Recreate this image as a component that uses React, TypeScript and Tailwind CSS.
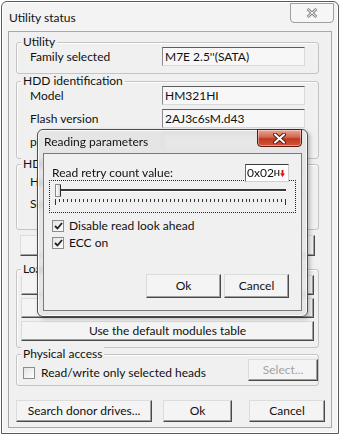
import type { ReactNode } from 'react'

const ui = "font-['Lato','Noto_Sans',sans-serif] text-[12px] leading-[14px] text-[#111]"

function Group({ label, className, children }: { label: string; className?: string; children?: ReactNode }) {
  return (
    <div className={`relative border border-[#c4c4c4] rounded-[3px] shadow-[inset_1px_1px_0_#ffffff] ${className ?? ''}`}>
      <span className="absolute -top-[8px] left-[4px] bg-[#f0f0f0] px-[2px]">{label}</span>
      {children}
    </div>
  )
}

function TextBox({ value }: { value: string }) {
  return (
    <div className="h-[19px] w-[143px] border border-[#d9d9d9] border-t-[#5c5c5c] border-l-[#8a8a8a] bg-[#f7f7f7] pl-[2px] leading-[17px] whitespace-nowrap overflow-hidden">
      {value}
    </div>
  )
}

function Field({ label, value }: { label: string; value: string }) {
  return (
    <div className="flex items-center justify-between pl-[13px] pr-[13px]">
      <span>{label}</span>
      <TextBox value={value} />
    </div>
  )
}

function Button({ children, className, disabled }: { children?: ReactNode; className?: string; disabled?: boolean }) {
  return (
    <div
      className={`flex items-center justify-center border border-[#dcdcdc] border-r-[#4a4a4a] border-b-[#4a4a4a] shadow-[inset_-1px_-1px_0_#a0a0a0] bg-[#f4f4f4] ${
        disabled ? 'text-[#a3a3a3]' : ''
      } ${className ?? ''}`}
    >
      {children}
    </div>
  )
}

function CheckBox({ checked }: { checked?: boolean }) {
  return (
    <span className="flex h-[12px] w-[12px] shrink-0 items-center justify-center border border-[#8c8c8c] bg-[linear-gradient(135deg,#e3e3e3,#ffffff)]">
      {checked && (
        <svg width="9" height="8" viewBox="0 0 9 8">
          <path d="M1 4 L3.5 6.5 L8 1" fill="none" stroke="#222" strokeWidth="1.8" />
        </svg>
      )}
    </span>
  )
}

function ReadingParameters() {
  const ticks = Array.from({ length: 59 }, (_, i) => i)
  return (
    <div className="absolute left-[35px] top-[127px] flex h-[188px] w-[271px] flex-col rounded-[6px] border border-[#4d4d4d] bg-[#e2e2e2]/80 shadow-[inset_0_0_0_1px_rgba(255,255,255,0.8),2px_2px_4px_rgba(0,0,0,0.25)] backdrop-blur-[2px]">
      <div className="relative flex h-[23px] items-center pl-[6px]">
        <span>Reading parameters</span>
        <div className="absolute -top-[1px] left-[219px] flex h-[18px] w-[45px] items-center justify-center rounded-b-[4px] border border-[#5e1a10] bg-[linear-gradient(#e9a797,#d26650_45%,#c0391f_55%,#d2543c)] shadow-[inset_0_0_0_1px_rgba(255,255,255,0.4)]">
          <svg width="13" height="11" viewBox="0 0 13 11">
            <path d="M2 1.5 L11 9.5 M11 1.5 L2 9.5" stroke="#5a1a10" strokeWidth="4" strokeLinecap="round" />
            <path d="M2 1.5 L11 9.5 M11 1.5 L2 9.5" stroke="#ffffff" strokeWidth="2" strokeLinecap="round" />
          </svg>
        </div>
      </div>
      <div className="mx-[5px] mb-[5px] flex flex-1 flex-col border border-[#7a7a7a] bg-[#f0f0f0]">
        <div className="relative z-10 mt-[10px] flex items-center justify-between pl-[8px] pr-[12px]">
          <span>Read retry count value:</span>
          <div className="flex h-[18px] w-[44px] items-center border border-[#cfcfcf] border-t-[#3a3a3a] border-l-[#6a6a6a] bg-white pl-[1px] pr-[3px]">
            <span>0x02</span>
            <span className="ml-auto flex items-center text-[8px] font-bold leading-none">
              H
              <svg width="5" height="7" viewBox="0 0 5 7">
                <path d="M2.5 7 L0 3.5 H1.5 V0 H3.5 V3.5 H5 Z" fill="#e0161c" />
              </svg>
            </span>
          </div>
        </div>
        <div className="mx-[5px] -mt-[2px] flex h-[33px] flex-col border border-dotted border-[#222] px-[5px] pt-[3px]">
          <div className="relative h-[13px]">
            <div className="absolute left-[1px] right-[4px] top-[5px] h-[2px] bg-[#3a3a3a] shadow-[0_1px_0_#ffffff]" />
            <div className="absolute left-0 top-0 h-[13px] w-[6px] rounded-[1px] border border-[#8a8a8a] border-r-[#2a2a2a] bg-[linear-gradient(90deg,#ffffff,#d4d4d4)]" />
          </div>
          <div className="mt-[2px] flex h-[6px] w-[232px] items-start justify-between">
            {ticks.map((i) => (
              <span key={i} className={`w-[1px] bg-[#333] ${i === 0 || i === 58 ? 'h-[6px]' : 'h-[3px]'}`} />
            ))}
          </div>
        </div>
        <div className="mt-[6px] flex flex-col gap-[3px] pl-[8px]">
          <div className="flex items-center gap-[5px]">
            <CheckBox checked />
            <span>Disable read look ahead</span>
          </div>
          <div className="flex items-center gap-[5px]">
            <CheckBox checked />
            <span>ECC on</span>
          </div>
        </div>
        <div className="mt-auto mb-[12px] flex justify-end gap-[3px] pr-[12px]">
          <Button className="h-[24px] w-[75px]">Ok</Button>
          <Button className="h-[24px] w-[65px]">Cancel</Button>
        </div>
      </div>
    </div>
  )
}

export default function App() {
  return (
    <div className={`${ui} h-[436px] w-[343px] bg-white p-[1px] pr-[4px]`}>
      <div className="relative flex h-[433px] flex-col rounded-t-[6px] border border-[#5a5a5a] bg-[#f3f3f3] shadow-[inset_0_0_0_1px_#ffffff]">
        <div className="relative flex h-[29px] items-center pl-[7px] pt-[2px]">
          <span>Utility status</span>
          <div className="absolute right-[4px] top-[1px] flex h-[20px] w-[44px] items-center justify-center rounded-b-[4px] border border-[#a0a0a0] bg-[#f6f6f6]">
            <svg width="12" height="10" viewBox="0 0 12 10">
              <path d="M1.5 1 L10.5 9 M10.5 1 L1.5 9" stroke="#8a8a8a" strokeWidth="3" />
              <path d="M1.5 1 L10.5 9 M10.5 1 L1.5 9" stroke="#f6f6f6" strokeWidth="1" />
            </svg>
          </div>
        </div>
        <div className="mx-[6px] mb-[5px] flex flex-1 flex-col border border-[#a8a8a8] bg-[#f0f0f0] pl-[7px] pr-[12px]">
          <Group label="Utility" className="mt-[10px] pt-[4px] pb-[7px]">
            <Field label="Family selected" value="M7E 2.5''(SATA)" />
          </Group>
          <Group label="HDD identification" className="mt-[7px] flex flex-col gap-[4px] pt-[4px] pb-[7px]">
            <Field label="Model" value="HM321HI" />
            <Field label="Flash version" value="2AJ3c6sM.d43" />
            <Field label="p" value="" />
          </Group>
          <Group label="HDD parameters" className="mt-[5px] flex flex-col gap-[3px] pt-[7px] pb-[16px]">
            <Field label="Heads" value="" />
            <Field label="Serial number" value="" />
          </Group>
          <div className="mt-[5px] flex gap-[6px] px-[4px]">
            <Button className="h-[21px] flex-1" />
            <Button className="h-[21px] flex-1" />
          </div>
          <Group label="Loading modules" className="mt-[13px] flex flex-col gap-[3px] px-[4px] pt-[5px] pb-[6px]">
            <Button className="h-[20px]" />
            <Button className="h-[20px]" />
            <Button className="h-[20px]">Use the default modules table</Button>
          </Group>
          <Group label="Physical access" className="mt-[6px] flex items-center justify-between pt-[4px] pb-[4px] pl-[6px]">
            <div className="mt-[6px] flex items-center gap-[6px]">
              <CheckBox />
              <span>Read/write only selected heads</span>
            </div>
            <Button disabled className="h-[22px] w-[70px]">
              Select...
            </Button>
          </Group>
          <div className="mt-[14px] -mr-[6px] flex">
            <Button className="h-[22px] w-[136px]">Search donor drives...</Button>
            <Button className="ml-[11px] h-[22px] w-[69px]">Ok</Button>
            <Button className="ml-[17px] h-[22px] w-[76px]">Cancel</Button>
          </div>
        </div>
        <ReadingParameters />
      </div>
    </div>
  )
}
